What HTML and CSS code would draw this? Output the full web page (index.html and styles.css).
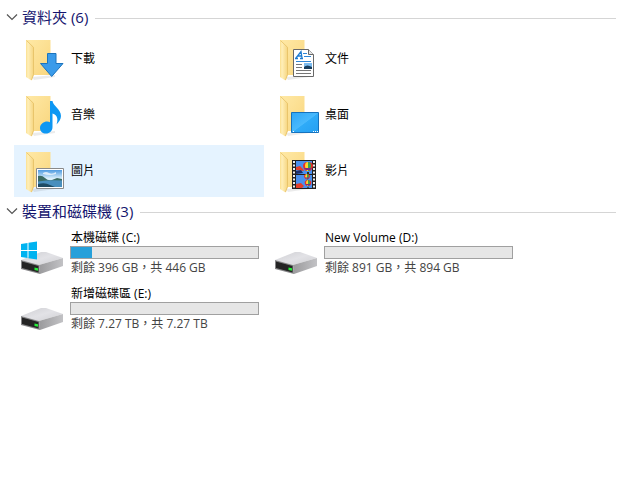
FILE: index.html
```html
<!DOCTYPE html>
<html lang="zh-Hant">
<head>
<meta charset="utf-8">
<meta name="viewport" content="width=device-width, initial-scale=1">
<title>本機</title>
<link rel="stylesheet" href="styles.css">
</head>
<body>
<svg class="defs" aria-hidden="true">
  <defs>
    <linearGradient id="folder-back" x1="0" y1="0" x2="1" y2="1">
      <stop offset="0" stop-color="#ffe9a6"/><stop offset="1" stop-color="#f9d67e"/>
    </linearGradient>
    <linearGradient id="folder-flap" x1="0" y1="0" x2="1" y2="0">
      <stop offset="0" stop-color="#fbdf8e"/><stop offset=".25" stop-color="#ffefb9"/><stop offset="1" stop-color="#f5d37c"/>
    </linearGradient>
    <linearGradient id="drive-top" x1="0" y1="0" x2="1" y2="1">
      <stop offset="0" stop-color="#cfcfd3"/><stop offset=".5" stop-color="#e2e2e6"/><stop offset="1" stop-color="#d0d0d4"/>
    </linearGradient>
    <linearGradient id="drive-side" x1="0" y1="0" x2="1" y2="0">
      <stop offset="0" stop-color="#9a9a9c"/><stop offset="1" stop-color="#c2c2c5"/>
    </linearGradient>
    <linearGradient id="screen" x1="0" y1="0" x2="1" y2="1">
      <stop offset="0" stop-color="#2ea6f5"/><stop offset=".5" stop-color="#48b9fd"/><stop offset=".52" stop-color="#2fabf8"/><stop offset="1" stop-color="#259ff2"/>
    </linearGradient>
    <linearGradient id="sky" x1="0" y1="0" x2="0" y2="1">
      <stop offset="0" stop-color="#4f9be0"/><stop offset=".5" stop-color="#d9effb"/>
    </linearGradient>
    <symbol id="folder" viewBox="0 0 48 48">
      <path d="M14 42l23-2v2l-21 3z" fill="#000" opacity=".08"/>
      <path d="M8 5h24.500v35H12z" fill="url(#folder-back)"/>
      <path d="M8 5l7.500 7q.5.6.5 1.500v26l-2.500 6L8 42z" fill="url(#folder-flap)"/>
      <path d="M8.500 5.500l7 6.800V39.500L13.500 45" fill="none" stroke="#e6c066" stroke-width=".8"/>
    </symbol>
    <symbol id="drive" viewBox="0 0 48 48">
      <path d="M3 31l20-8h5l17 6-24 7z" fill="url(#drive-top)"/>
      <path d="M21 36l24-7v8l-23 8z" fill="url(#drive-side)"/>
      <path d="M3 31l18 5 1 9-19-5z" fill="#858587"/>
      <path d="M4 32.500l16.500 4.500v6.500L4 39z" fill="#242424"/>
      <path d="M16.500 38.500l3.500.8v2.500l-3.500-.8z" fill="#25f03a"/>
    </symbol>
    <symbol id="balloon" viewBox="0 0 10 12">
      <path d="M0 4q0-4 5-4t5 4q0 3-3 5H3Q0 7 0 4z" fill="#e8302a"/>
      <path d="M2 4q0-4 3-4v9H4Q2 7 2 4z" fill="#ffd52e"/>
      <path d="M5 0q3 0 3 4 0 3-2 5H5z" fill="#35a853"/>
      <path d="M1 6h8L7 8H3z" fill="#7b2a83"/>
      <path d="M4 10h2v2H4z" fill="#332"/>
    </symbol>
  </defs>
</svg>

<main class="explorer">
  <section class="group">
    <h2 class="group-head">
      <button class="group-toggle" type="button" aria-expanded="true">
        <svg class="chevron" viewBox="0 0 12 12" aria-hidden="true"><path d="M1 3.500l5 5 5-5"/></svg>
        資料夾 (6)
      </button>
    </h2>
    <ul class="tiles">
      <li><a class="tile" href="#downloads">
        <svg class="icon" viewBox="0 0 48 48" aria-hidden="true"><use href="#folder"/>
          <path d="M29.500 18.500h8.500v10h7L33.700 41.500 22.500 28.500h7z" fill="#3a9bea" stroke="#1c74bd"/></svg>
        <span class="name">下載</span></a></li>
      <li><a class="tile" href="#documents">
        <svg class="icon" viewBox="0 0 48 48" aria-hidden="true"><use href="#folder"/>
          <path d="M21.500 14.500h15l5 5v22h-20z" fill="#fff" stroke="#686868"/>
          <path d="M36.500 14.500v5h5" fill="#e6e6e6" stroke="#686868"/>
          <path d="M24 23l5-6.500 1 6.500M25.500 21h4M23 23.500h3M28 23.500h3" fill="none" stroke="#1e7bd0" stroke-width="1.300"/>
          <path d="M31 18.500h4M32 21.500h7M24 26.500h15" stroke="#2e86d6"/>
          <path d="M24 29.500h6M24 32.500h6M24 35.500h15M24 38.500h15" stroke="#777"/>
          <path d="M32 28h8v6h-8z" fill="#7cbcf0"/><path d="M32 32q3-3 8 0v2h-8z" fill="#173e5e"/></svg>
        <span class="name">文件</span></a></li>
      <li><a class="tile" href="#music">
        <svg class="icon" viewBox="0 0 48 48" aria-hidden="true"><use href="#folder"/>
          <path d="M32 10h2.500c.5 5 8.500 8 8.500 15 0 3-2 6-4.500 8.500 1.500-5 1.500-9-4-11V36c0 4-3 6.500-6.500 6.500-3.500 0-6-2-6-5.500 0-4 4-6.500 7-6.500 1.200 0 2.200.2 3 .7z" fill="#0e97f3"/></svg>
        <span class="name">音樂</span></a></li>
      <li><a class="tile" href="#desktop">
        <svg class="icon" viewBox="0 0 48 48" aria-hidden="true"><use href="#folder"/>
          <path d="M19.500 21.500h27v20h-27z" fill="url(#screen)" stroke="#1672bd"/>
          <path d="M21 40.500h1M41 40.500h1M43 40.500h1M45 40.500h1" stroke="#fff"/></svg>
        <span class="name">桌面</span></a></li>
      <li><a class="tile selected" href="#pictures">
        <svg class="icon" viewBox="0 0 48 48" aria-hidden="true"><use href="#folder"/>
          <path d="M18.500 21.500h27v20h-27z" fill="#fff" stroke="#8a8a8a"/>
          <path d="M20 23h24v17H20z" fill="url(#sky)"/>
          <path d="M20 29q4-1 7 2t7 2l5-2 5 1v4H20z" fill="#3b6b62"/>
          <path d="M20 34.500q12-2 24-1V40H20z" fill="#4a8fbd"/>
          <path d="M20 37q7-2 12 1l5 2H20z" fill="#1f4b63"/>
          <path d="M25 26q3-2 6 0t7-1v2q-6 2-13 0z" fill="#fff" opacity=".7"/></svg>
        <span class="name">圖片</span></a></li>
      <li><a class="tile" href="#videos">
        <svg class="icon" viewBox="0 0 48 48" aria-hidden="true"><use href="#folder"/>
          <path d="M20 13h24v29H20z" fill="#202020"/>
          <path d="M24 14h16v13H24zM24 28h16v13H24z" fill="#4a90ee"/>
          <path d="M22 14v27M42 14v27" stroke="#eee" stroke-width="2" stroke-dasharray="2 1.500"/>
          <path d="M24 20l4-1 3 3 1 2-8-1zM24 37l5-1 3 3-2 2h-6z" fill="#e2402c"/>
          <path d="M24 24l5-1 2 3-7 1z" fill="#1b2f6d"/>
          <use href="#balloon" x="31" y="15" width="10" height="12"/>
          <use href="#balloon" x="31.500" y="27" width="7" height="7"/>
          <use href="#balloon" x="32" y="33" width="8" height="8"/></svg>
        <span class="name">影片</span></a></li>
    </ul>
  </section>

  <section class="group">
    <h2 class="group-head">
      <button class="group-toggle" type="button" aria-expanded="true">
        <svg class="chevron" viewBox="0 0 12 12" aria-hidden="true"><path d="M1 3.500l5 5 5-5"/></svg>
        裝置和磁碟機 (3)
      </button>
    </h2>
    <ul class="tiles">
      <li><a class="tile" href="#c">
        <svg class="icon" viewBox="0 0 48 48" aria-hidden="true"><use href="#drive"/>
          <path d="M3 15l6.500-1v7H3zM10.500 13.800L19 12.500V21h-8.500zM3 22h6.500v7L3 28zM10.500 22H19v8.500l-8.500-1.300z" fill="#00b3f0"/></svg>
        <span class="drive">
          <span class="name" id="drive-c">本機磁碟 (C:)</span>
          <progress class="usage" aria-labelledby="drive-c" value="50" max="446"></progress>
          <span class="space">剩餘 396 GB，共 446 GB</span>
        </span></a></li>
      <li><a class="tile" href="#d">
        <svg class="icon" viewBox="0 0 48 48" aria-hidden="true"><use href="#drive"/></svg>
        <span class="drive">
          <span class="name" id="drive-d">New Volume (D:)</span>
          <progress class="usage" aria-labelledby="drive-d" value="0" max="894"></progress>
          <span class="space">剩餘 891 GB，共 894 GB</span>
        </span></a></li>
      <li><a class="tile" href="#e">
        <svg class="icon" viewBox="0 0 48 48" aria-hidden="true"><use href="#drive"/></svg>
        <span class="drive">
          <span class="name" id="drive-e">新增磁碟區 (E:)</span>
          <progress class="usage" aria-labelledby="drive-e" value="0" max="727"></progress>
          <span class="space">剩餘 7.27 TB，共 7.27 TB</span>
        </span></a></li>
    </ul>
  </section>
</main>
</body>
</html>
```
FILE: styles.css
```css
* {
  box-sizing: border-box;
}

body {
  margin: 0;
  background: #fff;
  color: #000;
  font: 12px/16px "Open Sans", "Noto Sans CJK TC", sans-serif;
}

.defs {
  position: absolute;
  width: 0;
  height: 0;
}

.explorer {
  padding: 3px 7px 0 6px;
}

.group-head {
  display: flex;
  align-items: center;
  gap: 7px;
  height: 30px;
  margin: 0;
}

.group-head::after {
  content: "";
  flex: 1;
  height: 1px;
  background: #d5d5d5;
}

.group-toggle {
  display: flex;
  align-items: center;
  gap: 4px;
  padding: 0 0 2px;
  border: 0;
  background: none;
  color: #14146e;
  font: 15px/20px "Open Sans", "Noto Sans CJK TC", sans-serif;
}

.chevron {
  width: 12px;
  height: 12px;
  fill: none;
  stroke: #555;
  stroke-width: 1.2;
}

.tiles {
  display: grid;
  grid-template-columns: repeat(auto-fill, 250px);
  gap: 4px;
  margin: 0;
  padding: 0 0 0 8px;
  list-style: none;
}

.tile {
  display: flex;
  align-items: center;
  gap: 4px;
  height: 52px;
  padding: 0 5px 0 4px;
  color: inherit;
  text-decoration: none;
}

.tile.selected {
  background: #e5f3ff;
}

.icon {
  flex: none;
  width: 48px;
  height: 48px;
}

.name,
.space {
  padding-left: 1px;
  white-space: nowrap;
}

.drive {
  display: flex;
  flex: 1;
  flex-direction: column;
}

.usage {
  appearance: none;
  display: block;
  width: 100%;
  height: 13px;
  border: 1px solid #a0a0a0;
  background: #e6e6e6;
}

.usage::-webkit-progress-bar {
  background: #e6e6e6;
}

.usage::-webkit-progress-value {
  background: #26a0da;
}

.space {
  padding-top: 1px;
  color: #444;
}
```
